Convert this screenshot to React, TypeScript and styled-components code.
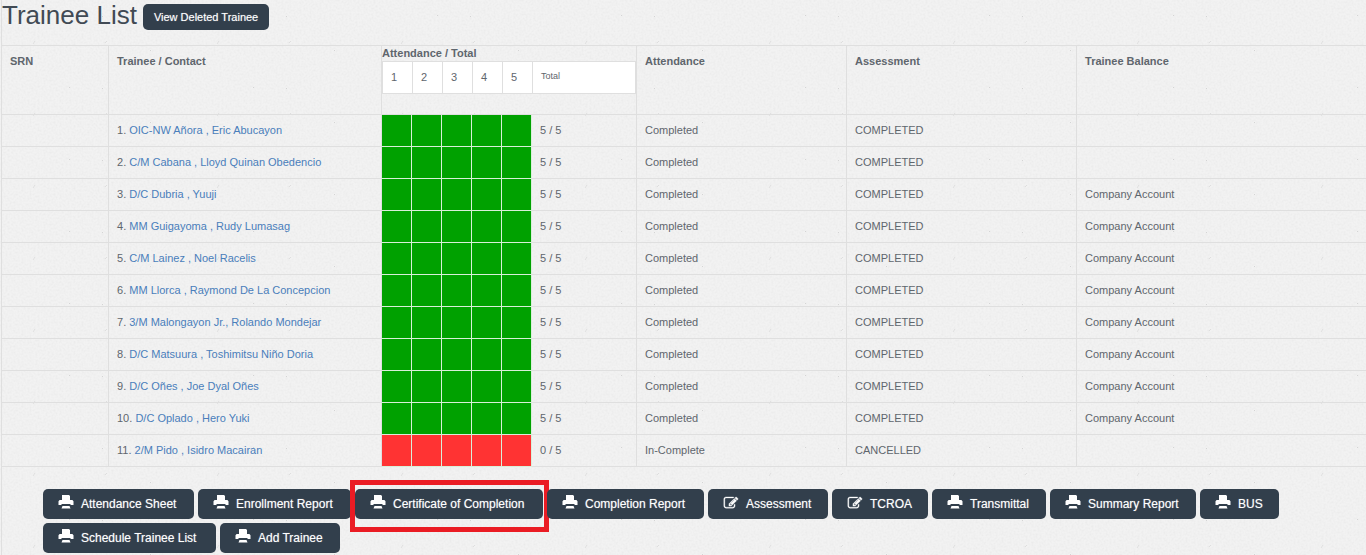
import React from "react";
import styled, { createGlobalStyle } from "styled-components";

const paper = `url("data:image/svg+xml,${encodeURIComponent(
  `<svg xmlns='http://www.w3.org/2000/svg' width='184' height='72'><filter id='n' x='0' y='0' width='100%' height='100%'><feTurbulence type='fractalNoise' baseFrequency='0.5' numOctaves='3' seed='4' stitchTiles='stitch'/><feColorMatrix values='0 0 0 0 0.4  0 0 0 0 0.4  0 0 0 0 0.4  0.22 0 0 0 -0.09'/></filter><rect width='184' height='72' filter='url(#n)'/><g fill='none' stroke='#dedede' stroke-width='1'><path d='M33 44l2-3M105 43l2-2'/></g><g fill='#d4d4d4'><path d='M69 15h1v1h-1zM102 16h1v1h-1zM150 50h1v1h-1z'/></g></svg>`
)}")`;

const GlobalStyle = createGlobalStyle`
  body {
    margin: 0;
    background: #f2f2f2 ${paper};
    color: #5f666d;
    font-family: "Liberation Sans", Arial, sans-serif;
    font-size: 11px;
    line-height: 16px;
  }
  * { box-sizing: border-box; }
`;

const Page = styled.main`
  margin-left: 1px;
  border-left: 1px solid #dfdfdf;
  min-height: 100vh;
`;

const Heading = styled.header`
  display: flex;
  align-items: flex-start;
  gap: 6px;
  padding-bottom: 15px;
`;

const Title = styled.h1`
  margin: 0;
  color: #414a54;
  font-size: 26px;
  font-weight: 400;
  line-height: 30px;
`;

const Button = styled.button<{ $width?: number }>`
  display: inline-flex;
  align-items: center;
  height: 30px;
  min-width: ${({ $width }) => ($width ? `${$width}px` : "0")};
  padding: 0 15px;
  border: 0;
  border-radius: 5px;
  background: #323f4c;
  color: #fff;
  font-family: inherit;
  font-size: 12px;
  text-shadow: 0 0 1px rgba(255, 255, 255, 0.5);
  white-space: nowrap;
  cursor: pointer;
`;

const SmallButton = styled(Button)`
  height: 26px;
  margin-top: 4px;
  padding: 0 11px;
  font-size: 11px;
`;

const Table = styled.table`
  width: 100%;
  table-layout: fixed;
  border-collapse: separate;
  border-spacing: 0;
  border-top: 1px solid #dfdfdf;
`;

const Column = styled.col<{ $width?: number }>`
  width: ${({ $width }) => ($width ? `${$width}px` : "auto")};
`;

const HeadCell = styled.th`
  height: 69px;
  padding: 7px 8px;
  border-right: 1px solid #dfdfdf;
  border-bottom: 1px solid #dfdfdf;
  text-align: left;
  vertical-align: top;
  &:last-child { border-right: 0; }
`;

const DaysHeadCell = styled(HeadCell)`
  padding: 0;
  line-height: 15px;
`;

const Cell = styled.td`
  height: 32px;
  padding: 0 8px 2px;
  border-right: 1px solid #dfdfdf;
  border-bottom: 1px solid #dfdfdf;
  white-space: nowrap;
  &:last-child { border-right: 0; }
`;

const DayCell = styled.td<{ $present: boolean }>`
  padding: 0;
  border-right: 1px solid #d9efd9;
  border-bottom: 1px solid #d9efd9;
  background: ${({ $present }) => ($present ? "#00a100" : "#ff3333")};
  background-clip: padding-box;
`;

const DayTable = styled.table`
  width: 100%;
  table-layout: fixed;
  border-collapse: collapse;
  background: #fff;
`;

const DayHead = styled.th`
  width: 30px;
  height: 32px;
  padding: 0 8px;
  border: 1px solid #dfdfdf;
  font-weight: 400;
  text-align: left;
`;

const TotalHead = styled(DayHead)`
  width: auto;
  padding-bottom: 2px;
  font-size: 9px;
`;

const TraineeLink = styled.a`
  color: #4a7ebb;
  text-decoration: none;
`;

const Actions = styled.nav`
  display: flex;
  flex-wrap: wrap;
  gap: 4px;
  padding: 22px 60px 2px 41px;
`;

const Action = styled.div`
  position: relative;
`;

const Highlight = styled.span`
  position: absolute;
  inset: -9px -6px -13px -5px;
  border: 5px solid #ea1c24;
  pointer-events: none;
`;

const IconBox = styled.svg`
  width: 16px;
  height: 16px;
  margin: 0 7px 2px 0;
  fill: currentColor;
`;

const PrintIcon = () => (
  <IconBox viewBox="0 0 16 16" aria-hidden="true">
    <path d="M4 0h7l1 1v4h2.400l1.100 1.200V10h-2.500l-1-1H4L3 10H.5V6.200L1.600 5H4zM4.500 11h7l1 2.500h-9z" />
  </IconBox>
);

const EditIcon = () => (
  <IconBox viewBox="-100 -110 2000 2000" stroke="currentColor" strokeWidth="40" aria-hidden="true">
    <path d="M888 1184l116-116-152-152-116 116v56h96v96h56zm440-720q-16-16-33 1l-350 350q-17 17-1 33t33-1l350-350q17-17 1-33zm80 594v190q0 119-84.5 203.5t-203.5 84.5h-832q-119 0-203.5-84.5t-84.5-203.5v-832q0-119 84.5-203.5t203.5-84.5h832q63 0 117 25 15 7 18 23 3 17-9 29l-49 49q-14 14-32 8-23-6-45-6h-832q-66 0-113 47t-47 113v832q0 66 47 113t113 47h832q66 0 113-47t47-113v-126q0-13 9-22l64-64q15-15 35-7t20 29zm-96-738l288 288-672 672h-288v-288zm444 132l-92 92-288-288 92-92q28-28 68-28t68 28l152 152q28 28 28 68t-28 68z" />
  </IconBox>
);

type Trainee = { name: string; attended: number; attendance: string; assessment: string; balance: string };

const trainee = (name: string, balance = "Company Account"): Trainee => ({
  name,
  attended: 5,
  attendance: "Completed",
  assessment: "COMPLETED",
  balance,
});

const trainees: Trainee[] = [
  trainee("OIC-NW Añora , Eric Abucayon", ""),
  trainee("C/M Cabana , Lloyd Quinan Obedencio", ""),
  trainee("D/C Dubria , Yuuji"),
  trainee("MM Guigayoma , Rudy Lumasag"),
  trainee("C/M Lainez , Noel Racelis"),
  trainee("MM Llorca , Raymond De La Concepcion"),
  trainee("3/M Malongayon Jr., Rolando Mondejar"),
  trainee("D/C Matsuura , Toshimitsu Niño Doria"),
  trainee("D/C Oñes , Joe Dyal Oñes"),
  trainee("D/C Oplado , Hero Yuki"),
  { name: "2/M Pido , Isidro Macairan", attended: 0, attendance: "In-Complete", assessment: "CANCELLED", balance: "" },
];

const days = [1, 2, 3, 4, 5];
const columnWidths = [107, 273, 30, 30, 30, 30, 30, 105, 210, 230];

const actions = [
  { label: "Attendance Sheet", width: 151 },
  { label: "Enrollment Report", width: 153 },
  { label: "Certificate of Completion", width: 188, highlighted: true },
  { label: "Completion Report", width: 157 },
  { label: "Assessment", width: 120, edit: true },
  { label: "TCROA", width: 96, edit: true },
  { label: "Transmittal", width: 114 },
  { label: "Summary Report", width: 146 },
  { label: "BUS", width: 79 },
  { label: "Schedule Trainee List", width: 173 },
  { label: "Add Trainee", width: 120 },
];

export default function App() {
  return (
    <Page>
      <GlobalStyle />
      <Heading>
        <Title>Trainee List</Title>
        <SmallButton type="button">View Deleted Trainee</SmallButton>
      </Heading>
      <Table>
        <colgroup>
          {columnWidths.map((width, i) => (
            <Column key={i} $width={width} />
          ))}
          <Column />
        </colgroup>
        <thead>
          <tr>
            <HeadCell>SRN</HeadCell>
            <HeadCell>Trainee / Contact</HeadCell>
            <DaysHeadCell colSpan={6}>
              Attendance / Total
              <DayTable>
                <tbody>
                  <tr>
                    {days.map((day) => (
                      <DayHead key={day}>{day}</DayHead>
                    ))}
                    <TotalHead>Total</TotalHead>
                  </tr>
                </tbody>
              </DayTable>
            </DaysHeadCell>
            <HeadCell>Attendance</HeadCell>
            <HeadCell>Assessment</HeadCell>
            <HeadCell>Trainee Balance</HeadCell>
          </tr>
        </thead>
        <tbody>
          {trainees.map((t, i) => (
            <tr key={t.name}>
              <Cell />
              <Cell>
                {i + 1}. <TraineeLink href="#">{t.name}</TraineeLink>
              </Cell>
              {days.map((day) => (
                <DayCell key={day} $present={day <= t.attended} />
              ))}
              <Cell>{t.attended} / 5</Cell>
              <Cell>{t.attendance}</Cell>
              <Cell>{t.assessment}</Cell>
              <Cell>{t.balance}</Cell>
            </tr>
          ))}
        </tbody>
      </Table>
      <Actions>
        {actions.map(({ label, width, edit, highlighted }) => (
          <Action key={label}>
            <Button type="button" $width={width}>
              {edit ? <EditIcon /> : <PrintIcon />}
              {label}
            </Button>
            {highlighted && <Highlight />}
          </Action>
        ))}
      </Actions>
    </Page>
  );
}
